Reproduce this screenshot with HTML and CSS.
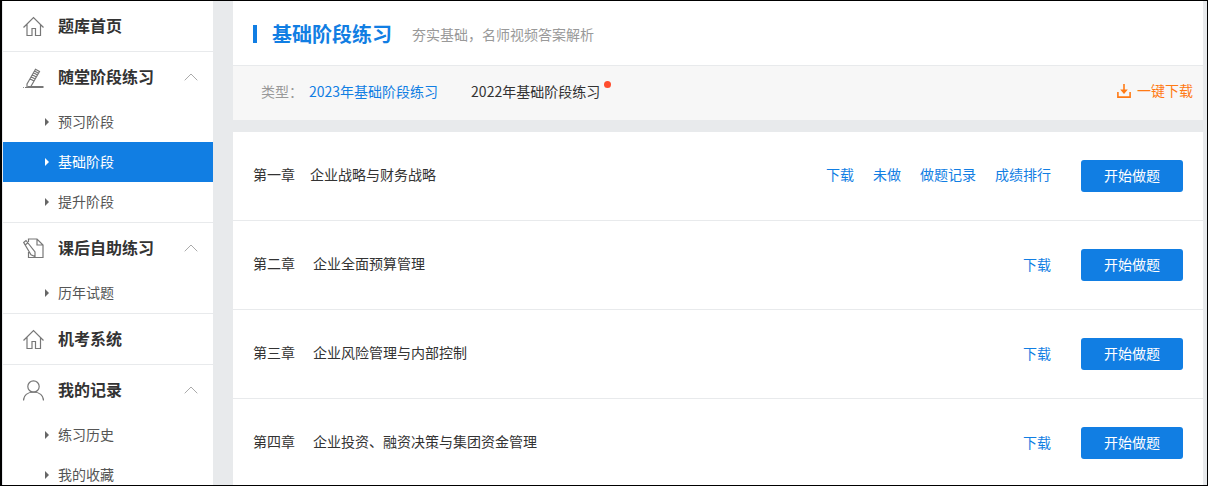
FILE: index.html
```html
<!DOCTYPE html>
<html lang="zh">
<head>
<meta charset="utf-8">
<title>基础阶段练习</title>
<link rel="stylesheet" href="styles.css">
</head>
<body>
<div class="frame">
  <aside class="side">
    <section class="group">
      <div class="head">
        <svg class="ico" viewBox="0 0 21 21"><path d="M.5 11.500 10.500 1.500l10 10M4 8.500v11h5v-7h3.500v7h5v-11" /></svg>
        <span>题库首页</span>
      </div>
    </section>
    <section class="group">
      <div class="head">
        <svg class="ico" viewBox="0 0 21 21"><path d="M4 17 11.500 4l4 2.300L8 19.300l-4 .7zM10.500 5.800l4 2.300M9.300 7.800l4 2.300M8.100 9.800l4 2.300M6.900 11.800l4 2.300M11.500 4l1-1.800 4 2.300-1 1.800M5 19.500h15.500M0 20.500h.8M2 20.500h18.500" /></svg>
        <span>随堂阶段练习</span>
        <svg class="chev" viewBox="0 0 14 8"><path d="M.7 7.300 7 1l6.300 6.300" /></svg>
      </div>
      <a class="sub">预习阶段</a>
      <a class="sub on">基础阶段</a>
      <a class="sub">提升阶段</a>
    </section>
    <section class="group">
      <div class="head">
        <svg class="ico" viewBox="0 0 21 21"><path d="M5.500 4V1H14l6 6v12.500H5.500V14M14 1v6h6M.7 4.500 3 2.500 12 14v4.500L8 16.800zM2 7l2.700-2" /></svg>
        <span>课后自助练习</span>
        <svg class="chev" viewBox="0 0 14 8"><path d="M.7 7.300 7 1l6.300 6.300" /></svg>
      </div>
      <a class="sub">历年试题</a>
    </section>
    <section class="group">
      <div class="head">
        <svg class="ico" viewBox="0 0 21 21"><path d="M.5 11.500 10.500 1.500l10 10M4 8.500v11h5v-7h3.500v7h5v-11" /></svg>
        <span>机考系统</span>
      </div>
    </section>
    <section class="group">
      <div class="head">
        <svg class="ico" viewBox="0 0 21 21"><circle cx="10.500" cy="6.500" r="5.700" /><path d="M.5 20.500c0-5 4-8.500 10-8.500s10 3.500 10 8.500" /></svg>
        <span>我的记录</span>
        <svg class="chev" viewBox="0 0 14 8"><path d="M.7 7.300 7 1l6.300 6.300" /></svg>
      </div>
      <a class="sub">练习历史</a>
      <a class="sub">我的收藏</a>
    </section>
  </aside>
  <main class="main">
    <div class="panel">
      <header class="title">
        <i class="bar"></i>
        <h1>基础阶段练习</h1>
        <p>夯实基础，名师视频答案解析</p>
      </header>
      <div class="filter">
        <span class="label">类型：</span>
        <a class="tab cur">2023年基础阶段练习</a>
        <a class="tab dot">2022年基础阶段练习</a>
        <a class="dl">
          <svg viewBox="0 0 14 14"><path class="ar" d="M7 0v8" /><path class="hd" d="M3.200 5.600h7.600L7 10z" /><path class="ar" d="M.9 8v5.100h12.200V8" /></svg>
          一键下载
        </a>
      </div>
    </div>
    <div class="list">
      <div class="row">
        <span class="ch">第一章</span><span class="name first">企业战略与财务战略</span>
        <nav class="ops multi"><a>下载</a><a>未做</a><a>做题记录</a><a>成绩排行</a></nav>
        <button class="go">开始做题</button>
      </div>
      <div class="row">
        <span class="ch">第二章</span><span class="name">企业全面预算管理</span>
        <nav class="ops"><a>下载</a></nav>
        <button class="go">开始做题</button>
      </div>
      <div class="row">
        <span class="ch">第三章</span><span class="name">企业风险管理与内部控制</span>
        <nav class="ops"><a>下载</a></nav>
        <button class="go">开始做题</button>
      </div>
      <div class="row">
        <span class="ch">第四章</span><span class="name">企业投资、融资决策与集团资金管理</span>
        <nav class="ops"><a>下载</a></nav>
        <button class="go">开始做题</button>
      </div>
    </div>
  </main>
</div>
</body>
</html>
```
FILE: styles.css
```css
* { box-sizing: border-box; }
html, body { margin: 0; height: 100%; overflow: hidden; background: #000; }
body { font-family: "Noto Sans CJK SC", "Liberation Sans", sans-serif; color: #333; }
a { display: block; }

.frame {
  height: 484px;
  margin: 1px 1px 0 1px;
  padding: 0 4px 0 1px;
  border-left: 1px solid #000;
  background: #e8eaec;
  display: flex;
  gap: 20px;
  overflow: hidden;
}

.side { width: 210px; flex: none; height: 520px; background: #fff; }
.group { border-bottom: 1px solid #e8eaec; }
.head {
  height: 50px;
  display: flex;
  align-items: center;
  padding-left: 20px;
  font-size: 16px;
  font-weight: 700;
  color: #333;
}
.head span { padding-bottom: 2px; }
.ico { width: 21px; height: 21px; margin-right: 14px; fill: none; stroke: #777; stroke-width: 1.2; flex: none; }
.chev { width: 14px; height: 8px; margin-left: auto; margin-right: 15px; fill: none; stroke: #aaa; stroke-width: 1; }
.sub {
  height: 40px;
  line-height: 38px;
  padding-left: 55px;
  font-size: 14px;
  color: #555;
  position: relative;
}
.sub::before {
  content: "";
  position: absolute;
  left: 42px;
  top: 16px;
  border-left: 4px solid #666;
  border-top: 4px solid transparent;
  border-bottom: 4px solid transparent;
}
.sub.on { background: #117ee3; color: #fff; }
.sub.on::before { border-left-color: #fff; }

.main { flex: 1; min-width: 0; }
.panel { background: #fff; margin-bottom: 12px; }
.title { height: 65px; display: flex; align-items: center; padding: 1px 0 0 20px; border-bottom: 1px solid #e8eaec; }
.bar { width: 4px; height: 18px; background: #117ee3; margin-right: 15px; }
.title h1 { margin: 0; font-size: 20px; font-weight: 700; color: #117ee3; }
.title p { margin: 0 0 0 20px; font-size: 14px; color: #999; }

.filter { height: 54px; display: flex; align-items: center; padding: 0 10px 4px 28px; background: #f7f7f7; font-size: 14px; }
.label { color: #999; width: 48px; }
.tab { margin-right: 33px; position: relative; color: #333; }
.tab.cur { color: #117ee3; }
.tab.dot::after { content: ""; position: absolute; right: -11px; top: 0; width: 7px; height: 7px; border-radius: 50%; background: #ff4d2e; }
.dl { margin-left: auto; margin-bottom: 2px; display: flex; align-items: center; gap: 6px; color: #ff7a14; }
.dl svg { width: 14px; height: 14px; margin-top: 2px; }
.dl .ar { fill: none; stroke: #ff7a14; stroke-width: 1.6; }
.dl .hd { fill: #ff7a14; }

.list { background: #fff; }
.row {
  height: 89px;
  display: flex;
  align-items: center;
  padding: 0 20px;
  border-bottom: 1px solid #e8eaec;
  font-size: 14px;
  color: #333;
}
.ch { margin-right: 18px; padding-bottom: 4px; }
.name { padding-bottom: 4px; }
.name.first { margin-left: -3px; }
.ops { margin-left: auto; display: flex; gap: 19px; color: #117ee3; padding-bottom: 2px; }
.ops.multi { padding-bottom: 4px; }
.go {
  width: 102px;
  height: 32px;
  margin-left: 30px;
  padding: 0 0 2px;
  border: 0;
  border-radius: 3px;
  background: #117ee3;
  color: #fff;
  font: inherit;
}
```
